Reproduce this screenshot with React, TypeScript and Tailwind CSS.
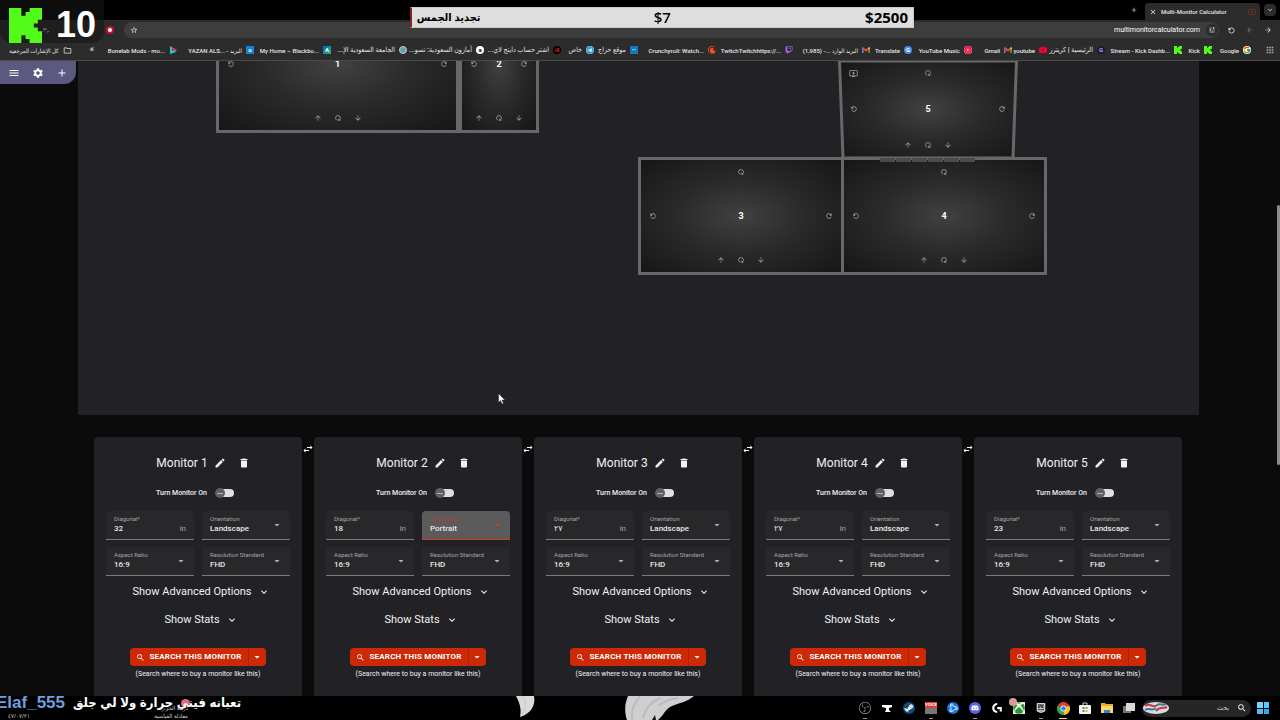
import clsx from 'clsx';
import React, { FunctionComponent } from 'react';
import { FaDiscord, FaSteamSymbol, FaXbox } from 'react-icons/fa';
import { FcGoogle } from 'react-icons/fc';
import {
  MdAdd, MdApps, MdArrowBack, MdArrowDownward, MdArrowDropDown, MdArrowForward, MdArrowUpward,
  MdClose, MdDelete, MdEdit, MdExpandMore, MdMenu, MdOutlineAddToQueue, MdOutlineFolder,
  MdPlaylistPlay, MdRefresh, MdSearch, MdSettings, MdStarOutline, MdSwapHoriz, MdTune,
} from 'react-icons/md';
import {
  SiBattledotnet, SiCrunchyroll, SiEpicgames, SiLogitechg, SiObsstudio, SiTelegram,
  SiTwitch, SiYoutube, SiYoutubemusic,
} from 'react-icons/si';

interface Bookmark {
  title: string
  width: string
  icon: React.ReactNode
  rtl?: boolean
}

interface Monitor {
  id: number
  diagonal: string
  orientation: string
  active?: boolean
}

interface ScreenProps {
  label: number
  className: string
  tilted?: boolean
}

interface SelectFieldProps {
  id: string
  label: string
  value: string
  options: string[]
  active?: boolean
}

const KickLogo: FunctionComponent<{ className: string }> = ({ className }) => (
  <svg className={className} fill="#53fc18" preserveAspectRatio="none" viewBox="1.333 0 21.334 24">
    <path d="M1.333 0h8v5.333H12V2.667h2.667V0h8v8H20v2.667h-2.667v2.666H20V16h2.667v8h-8v-2.667H12v-2.666H9.333V24h-8Z" />
  </svg>
);

const GmailLogo: FunctionComponent = () => (
  <svg className="h-2 w-2" viewBox="0 0 24 24">
    <path d="M0 5v16h5V9l7 6Z" fill="#4285f4" />
    <path d="M24 5v16h-5V9l-7 6Z" fill="#34a853" />
    <path d="M0 4h4l8 6 8-6h4v4l-12 9L0 8Z" fill="#ea4335" />
    <path d="M19 5l5-1v4l-5 4Z" fill="#fbbc04" />
  </svg>
);

const Badge: FunctionComponent<{ className: string; children?: React.ReactNode }> = ({
  className, children,
}) => (
  <span className={clsx('flex h-2 w-2 items-center justify-center text-[6px] font-bold leading-none', className)}>
    {children}
  </span>
);

const bookmarks: Bookmark[] = [
  {
    title: 'Bonelab Mods - mo...',
    width: 'w-[77px]',
    icon: (
      <svg className="h-2 w-2" viewBox="0 0 8 8">
        <path d="M1 0 8 4 6 6 3 3Z" fill="#e5384f" />
        <path d="M1 0v8l6-2-2-2-2 1V2Z" fill="#25c7c9" />
      </svg>
    ),
  },
  { title: 'YAZAN ALS... - البريد', width: 'w-[77px]', icon: <Badge className="bg-[#1683d8] text-white">o</Badge> },
  { title: 'My Home – Blackbo...', width: 'w-[77px]', icon: <Badge className="bg-gradient-to-br from-[#1266c4] to-[#35b558] text-white">A</Badge> },
  {
    title: 'الجامعة السعودية الإ...', width: 'w-[76px]', rtl: true, icon: <Badge className="rounded-full border border-[#b7d3dc] bg-[#6b9aa8]" />,
  },
  {
    title: 'أمازون السعودية: تسو...', width: 'w-[77px]', rtl: true, icon: <Badge className="rounded-sm bg-white text-black">a</Badge>,
  },
  {
    title: 'اشتر حساب دايتج لاي...', width: 'w-[77px]', rtl: true, icon: <Badge className="rounded-full bg-black text-[#e0202c]">ıll</Badge>,
  },
  {
    title: 'خاص', width: 'w-[33px]', rtl: true, icon: <SiTelegram className="h-2 w-2 rounded-full bg-white text-[#2aa1da]" />,
  },
  {
    title: 'موقع حراج', width: 'w-[44px]', rtl: true, icon: <Badge className="bg-[#1478b8] text-[#9fd4f5]">••</Badge>,
  },
  { title: 'Crunchyroll: Watch...', width: 'w-[78px]', icon: <SiCrunchyroll className="h-2 w-2 text-[#f4511e]" /> },
  { title: 'TwitchTwitchhttps://...', width: 'w-[77px]', icon: <SiTwitch className="h-2 w-2 text-[#a56bff]" /> },
  { title: '(1,985) -... البريد الوارد', width: 'w-[77px]', icon: <GmailLogo /> },
  { title: 'Translate', width: 'w-[42px]', icon: <Badge className="rounded-sm bg-[#4a8af4] text-white">G</Badge> },
  { title: 'YouTube Music', width: 'w-[60px]', icon: <SiYoutubemusic className="h-2 w-2 rounded-full bg-white text-[#ff0033]" /> },
  { title: 'Gmail', width: 'w-[40px]', icon: <GmailLogo /> },
  { title: 'youtube', width: 'w-[35px]', icon: <SiYoutube className="h-2 w-2 text-[#ff0033]" /> },
  {
    title: 'الرئيسية | كريترز', width: 'w-[58px]', rtl: true, icon: <Badge className="rounded-sm bg-[#1f1838] text-[#b6a5f5]">G</Badge>,
  },
  { title: 'Stream - Kick Dashb...', width: 'w-[77px]', icon: <KickLogo className="h-2 w-2" /> },
  { title: 'Kick', width: 'w-[30px]', icon: <KickLogo className="h-2 w-2" /> },
  { title: 'Google', width: 'w-[39px]', icon: <FcGoogle className="h-2 w-2 rounded-full bg-white" /> },
];

const monitors: Monitor[] = [
  { id: 1, diagonal: '32', orientation: 'Landscape' },
  {
    id: 2, diagonal: '18', orientation: 'Portrait', active: true,
  },
  { id: 3, diagonal: '٢٧', orientation: 'Landscape' },
  { id: 4, diagonal: '٢٧', orientation: 'Landscape' },
  { id: 5, diagonal: '23', orientation: 'Landscape' },
];

const BrowserBar: FunctionComponent = () => (
  <header className="shrink-0 bg-[#2c2c2c] font-[Roboto,'DejaVu_Sans_Condensed','DejaVu_Sans',sans-serif] text-[#e6e6e6]">
    <div className="flex h-5 items-end justify-end bg-black">
      <button aria-label="New tab" className="mr-px flex h-5 w-5 items-center justify-center" type="button">
        <MdAdd className="h-2 w-2" />
      </button>
      <div className="flex h-[17px] w-[115px] items-center gap-1 rounded-t bg-[#2c2c2c] px-1">
        <button aria-label="Close tab" type="button"><MdClose className="h-2 w-2" /></button>
        <span className="flex-1 whitespace-nowrap text-[6px] font-medium">Multi-Monitor Calculator</span>
        <MdOutlineAddToQueue className="h-2 w-2 text-[#7d2a22]" />
      </div>
      <button aria-label="Search tabs" className="mx-1 mb-1 flex h-3 w-3 items-center justify-center rounded bg-[#2c2c2c]" type="button">
        <MdExpandMore className="h-2 w-2" />
      </button>
    </div>
    <div className="flex h-5 items-center">
      <div className="flex w-[124px] items-center justify-end gap-4 pr-[10px]">
        <MdPlaylistPlay className="h-2 w-2" />
        <span className="w-6" />
        <span className="flex h-2 w-2 items-center justify-center rounded-full bg-[#c4102c]">
          <span className="h-1 w-1 rounded-full bg-white" />
        </span>
      </div>
      <div className="flex h-4 flex-1 items-center rounded-full bg-[#3d3d3d] pl-1 pr-px">
        <MdStarOutline className="ml-[2px] h-2 w-2" />
        <input
          aria-label="Address"
          className="mx-[6px] min-w-0 flex-1 bg-transparent text-right text-[7px] text-white outline-none"
          defaultValue="multimonitorcalculator.com"
          type="text"
        />
        <span className="flex h-3 w-3 items-center justify-center rounded-full bg-[#2c2c2c]"><MdTune className="h-2 w-2" /></span>
      </div>
      <div className="flex w-[61px] items-center justify-between px-2">
        <button aria-label="Reload" type="button"><MdRefresh className="h-[9px] w-[9px] -scale-x-100" /></button>
        <button aria-label="Back" className="text-[#777]" type="button"><MdArrowBack className="h-2 w-2" /></button>
        <button aria-label="Forward" type="button"><MdArrowForward className="h-2 w-2" /></button>
      </div>
    </div>
    <nav className="flex h-[21px] items-center justify-end border-b border-[#4a4a4a] text-[6px] font-medium">
      <div className="flex w-[100px] items-center justify-end gap-1 whitespace-nowrap pr-[6px]">
        <span dir="rtl">كل الإشارات المرجعية</span>
        <MdOutlineFolder className="mr-[14px] h-[9px] w-[9px] shrink-0" />
        <span className="text-[9px]">«</span>
      </div>
      {bookmarks.map((item) => (
        <a
          key={item.title}
          className={clsx('flex shrink-0 items-center justify-end gap-1 whitespace-nowrap', item.width, item.rtl && 'text-[7px]')}
          href="#bookmark"
        >
          <span dir={item.rtl ? 'rtl' : 'ltr'}>{item.title}</span>
          <span className="shrink-0">{item.icon}</span>
        </a>
      ))}
      <MdApps className="ml-[14px] mr-[5px] h-[10px] w-[10px] shrink-0 text-[#aaa]" />
    </nav>
  </header>
);

const RotateButton: FunctionComponent<{ label: string; flip?: boolean; className?: string }> = ({
  label, flip, className,
}) => (
  <button aria-label={label} className={className} type="button">
    <MdRefresh className={clsx('h-2 w-2', flip && '-scale-x-100')} />
  </button>
);

const Screen: FunctionComponent<ScreenProps> = ({ label, className, tilted }) => (
  <div
    className={clsx(
      'absolute flex flex-col items-center justify-between px-2 text-[#a3a3a3]',
      !tilted && 'border-[3px] border-[#686868] bg-[radial-gradient(ellipse_at_center,#414141_0%,#2a2a2a_45%,#161616_100%)] py-2',
      tilted && 'pb-[10px] pt-2',
      className,
    )}
  >
    {tilted && (
      <svg className="absolute inset-0 h-full w-full" preserveAspectRatio="none" viewBox="0 0 180 98">
        <defs>
          <radialGradient id="glow" r="0.7">
            <stop offset="0" stopColor="#414141" />
            <stop offset="0.45" stopColor="#2a2a2a" />
            <stop offset="1" stopColor="#161616" />
          </radialGradient>
        </defs>
        <path d="M1.5 0h177L175 97H5Z" fill="url(#glow)" stroke="#686868" strokeWidth="3" />
      </svg>
    )}
    {tilted && (
      <button aria-label="Stack monitor" className="absolute left-[11px] top-2" type="button">
        <MdOutlineAddToQueue className="h-[9px] w-[9px]" />
      </button>
    )}
    <RotateButton className="relative rotate-90" label="Tilt back" />
    <div className={clsx('relative flex w-full items-center justify-between', tilted && 'px-1')}>
      <RotateButton flip label="Turn left" />
      <span className="text-[9px] font-bold leading-3 text-white">{label}</span>
      <RotateButton label="Turn right" />
    </div>
    <div className="relative flex gap-3">
      <button aria-label="Move up" type="button"><MdArrowUpward className="h-2 w-2" /></button>
      <RotateButton className="rotate-90" label="Tilt forward" />
      <button aria-label="Move down" type="button"><MdArrowDownward className="h-2 w-2" /></button>
    </div>
  </div>
);

const fieldClass = 'flex h-[29px] min-w-0 items-center rounded-t-sm border-b px-2';

const SelectField: FunctionComponent<SelectFieldProps> = ({
  id, label, value, options, active,
}) => (
  <div className={clsx(fieldClass, active ? 'border-[#d9391b] bg-[#5b5b5b]' : 'border-[#7c7c7e] bg-[#28282b]')}>
    <div className="flex min-w-0 flex-1 flex-col">
      <label className={clsx('whitespace-nowrap text-[6px] leading-2', active ? 'text-[#b9422c]' : 'text-[#a5a5a7]')} htmlFor={id}>{label}</label>
      <select className="w-full appearance-none bg-transparent text-[8px] font-medium leading-3 text-[#e8e8e8] outline-none" defaultValue={value} id={id}>
        {options.map((option) => <option key={option}>{option}</option>)}
      </select>
    </div>
    <MdArrowDropDown className={clsx('-mr-px h-3 w-3 shrink-0', active ? 'text-[#d9391b]' : 'text-[#b0b0b0]')} />
  </div>
);

const MonitorCard: FunctionComponent<{ monitor: Monitor; last: boolean }> = ({ monitor, last }) => (
  <section className="relative flex min-w-0 flex-col items-center rounded-t bg-[#222226] px-3 pt-3 pb-8 text-[#f0f0f0]">
    {!last && (
      <button aria-label="Swap monitors" className="absolute -right-3 top-[6px] text-white" type="button">
        <MdSwapHoriz className="h-3 w-3" />
      </button>
    )}
    <div className="flex h-7 items-center pl-4">
      <h2 className="text-[12px]">{`Monitor ${monitor.id}`}</h2>
      <button aria-label="Rename" className="flex h-6 w-6 items-center justify-center" type="button"><MdEdit className="h-3 w-3" /></button>
      <button aria-label="Delete" className="flex h-6 w-6 items-center justify-center" type="button"><MdDelete className="h-3 w-3" /></button>
    </div>
    <label className="mt-[10px] flex h-3 items-center gap-2 pr-[6px] text-[7px] font-medium" htmlFor={`power-${monitor.id}`}>
      Turn Monitor On
      <span className="relative flex h-[10px] w-[19px] items-center">
        <input className="peer absolute inset-0 m-0 opacity-0" id={`power-${monitor.id}`} role="switch" type="checkbox" />
        <span className="ml-1 h-2 w-[15px] rounded-full bg-[#dedede]" />
        <span className="pointer-events-none absolute left-0 flex h-[10px] w-[10px] items-center justify-center rounded-full bg-[#606060] peer-checked:left-[9px]">
          <span className="h-px w-[6px] bg-[#b5b5b5]" />
        </span>
      </span>
    </label>
    <div className="mt-3 grid w-full grid-cols-2 gap-x-2 gap-y-[7px]">
      <div className={clsx(fieldClass, 'border-[#7c7c7e] bg-[#28282b]')}>
        <div className="flex min-w-0 flex-1 flex-col">
          <label className="text-[6px] leading-2 text-[#a5a5a7]" htmlFor={`diagonal-${monitor.id}`}>Diagonal*</label>
          <input
            className="h-3 w-full bg-transparent text-[8px] font-medium leading-3 text-[#e8e8e8] outline-none"
            defaultValue={monitor.diagonal}
            id={`diagonal-${monitor.id}`}
            type="text"
          />
        </div>
        <span className="pt-2 text-[8px] text-[#a5a5a7]">in</span>
      </div>
      <SelectField
        active={monitor.active}
        id={`orientation-${monitor.id}`}
        label="Orientation"
        options={['Landscape', 'Portrait']}
        value={monitor.orientation}
      />
      <SelectField id={`ratio-${monitor.id}`} label="Aspect Ratio" options={['16:9', '21:9']} value="16:9" />
      <SelectField id={`resolution-${monitor.id}`} label="Resolution Standard" options={['FHD', 'QHD', 'UHD']} value="FHD" />
    </div>
    <button className="mt-2 flex h-4 items-center gap-[6px] pl-[6px] text-[11px]" type="button">
      Show Advanced Options
      <MdExpandMore className="h-3 w-3" />
    </button>
    <button className="mt-3 flex h-4 items-center gap-[6px] pl-[6px] text-[11px]" type="button">
      Show Stats
      <MdExpandMore className="h-3 w-3" />
    </button>
    <div className="mt-5 flex h-[18px] rounded-sm bg-[#cd2906] text-white">
      <button className="flex items-center gap-1 whitespace-nowrap px-[6px] text-[8px] font-bold tracking-wide" type="button">
        <MdSearch className="h-[9px] w-[9px]" />
        SEARCH THIS MONITOR
      </button>
      <button aria-label="More stores" className="flex w-[18px] items-center justify-center border-l border-[#a82408]" type="button">
        <MdArrowDropDown className="h-3 w-3" />
      </button>
    </div>
    <p className="mt-1 whitespace-nowrap text-[7px] leading-2">(Search where to buy a monitor like this)</p>
  </section>
);

const ChromeLogo: FunctionComponent = () => (
  <svg className="h-[13px] w-[13px]" viewBox="0 0 24 24">
    <path d="M12 12 1.6 6A12 12 0 0 1 22.4 6Z" fill="#e33b2e" />
    <path d="M12 12 1.6 6A12 12 0 0 0 12 24Z" fill="#30a852" />
    <path d="M12 12V24A12 12 0 0 0 22.4 6Z" fill="#fbc116" />
    <circle cx="12" cy="12" fill="#fff" r="5.5" />
    <circle cx="12" cy="12" fill="#3f7ee8" r="4.3" />
  </svg>
);

const taskbarApps = [
  { name: 'OBS Studio', icon: <SiObsstudio className="h-3 w-3 text-[#b9b9b9]" />, running: true },
  {
    name: 'Anvil',
    icon: (
      <svg className="h-3 w-3" fill="#fff" viewBox="0 0 12 12">
        <path d="M1 3h10v2L8 6v2l2 2H4l1-2V6L1 5Z" />
      </svg>
    ),
  },
  { name: 'Steam', icon: <FaSteamSymbol className="h-3 w-3 rounded-full bg-[#114d7c] p-px text-white" /> },
  {
    name: 'Voicemeeter',
    icon: (
      <span className="flex h-3 w-3 flex-col bg-[#777] text-center text-[4px] font-bold leading-[6px] text-white">
        <span className="bg-[#df3b3b]">VOICE</span>
      </span>
    ),
    running: true,
  },
  { name: 'Battle.net', icon: <SiBattledotnet className="h-3 w-3 rounded-full bg-[#1273d8] p-px text-[#d5edff]" /> },
  { name: 'Discord', icon: <FaDiscord className="h-3 w-3 rounded-full bg-[#5b62e8] p-[2px] text-white" />, running: true },
  { name: 'Logitech G Hub', icon: <SiLogitechg className="h-[10px] w-[10px] text-white" /> },
  {
    name: 'Xbox',
    icon: (
      <span className="relative">
        <FaXbox className="h-3 w-3 bg-[#f0f0f0] text-[#279a2b]" />
        <span className="absolute -left-1 -top-1 h-2 w-2 rounded-full bg-[#d59a9a]" />
      </span>
    ),
  },
  { name: 'Epic Games', icon: <SiEpicgames className="h-[10px] w-[10px] text-[#d5d5d5]" />, running: true },
  { name: 'Chrome', icon: <ChromeLogo />, running: true },
  {
    name: 'Microsoft Store',
    icon: (
      <svg className="h-3 w-3" viewBox="0 0 12 12">
        <path d="M4 3V1h4v2" fill="none" stroke="#b9d9ed" />
        <rect fill="#f4f4f4" height="9" rx="1" width="12" y="3" />
        <path d="M3.500 5h2v2h-2Z" fill="#e8512b" />
        <path d="M6.500 5h2v2h-2Z" fill="#74b733" />
        <path d="M3.500 8h2v2h-2Z" fill="#2196e8" />
        <path d="M6.500 8h2v2h-2Z" fill="#f5b91d" />
      </svg>
    ),
  },
  {
    name: 'File Explorer',
    icon: (
      <svg className="h-3 w-3" viewBox="0 0 12 12">
        <path d="M0 1h4l1 1h7v9H0Z" fill="#e9ad30" />
        <path d="M0 4h12v7H0Z" fill="#fbd669" />
        <path d="M3 8h6v3H3Z" fill="#2f86ce" />
      </svg>
    ),
  },
  {
    name: 'Task View',
    icon: (
      <svg className="h-3 w-3" viewBox="0 0 12 12">
        <path d="M0 4h8v7H0Z" fill="#777" />
        <path d="M3 1h9v8H3Z" fill="#d9d9d9" />
      </svg>
    ),
  },
];

const Taskbar: FunctionComponent = () => (
  <footer className="relative flex h-6 shrink-0 items-center justify-end bg-black font-['Open_Sans','DejaVu_Sans_Condensed','DejaVu_Sans',sans-serif]">
    <div className="absolute left-2 top-2 flex w-[180px] items-end justify-between text-[6px] leading-2 text-[#cfcfcf]">
      <span className="pt-2">٤٧/٠٧/٢١</span>
      <span dir="rtl">
        درجة الحرارة
        <br />
        معادلة القياسية
      </span>
    </div>
    <span className="absolute left-[181px] top-[3px] h-[9px] w-[9px] rounded-full bg-[#e06a88]" />
    <svg className="absolute left-[516px] top-0 h-6 w-[178px]" viewBox="0 0 178 24">
      <path d="M0 0h18c2 10-4 18-14 21C6 12 3 6 0 0Z" fill="#dadada" />
      <path d="M7 0c3 6 3 11-1 18" fill="none" stroke="#c8c8c8" />
      <path d="M112 0h66c-7 6-15 7-22 10-7 3-8 9-14 14h-31c-3-9-2-17 1-24Z" fill="#cfcfcf" />
      <path d="M124 0c-6 7-9 14-8 24M144 2c-9 4-15 11-17 20M162 2c-9 1-15 4-20 8" fill="none" stroke="#bcbcbc" strokeWidth="2" />
      <path d="m136 24 3-5 1 5Z" fill="#111" />
    </svg>
    {taskbarApps.map((app) => (
      <button
        key={app.name}
        aria-label={app.name}
        className="relative flex h-6 w-[22px] items-center justify-center"
        type="button"
      >
        {app.icon}
        {app.running && (
          <span className={clsx('absolute bottom-px h-px', app.name === 'Chrome' ? 'w-2 bg-[#f0d1a5]' : 'w-1 bg-[#999]')} />
        )}
      </button>
    ))}
    <label className="ml-[2px] flex h-[17px] w-[109px] items-center gap-1 rounded-full bg-[#262626] pr-1" htmlFor="task-search">
      <svg className="h-3 w-7 shrink-0" viewBox="0 0 28 12">
        <ellipse cx="14" cy="6" fill="#d8dce0" rx="13" ry="6" />
        <path d="M3 4c5-4 8 3 12-1M14 9c4-5 7-2 11-4" fill="none" stroke="#c33b45" strokeWidth="2" />
        <path d="M3 8c5-3 7 2 11-2M15 3c4-2 6 1 9-1" fill="none" stroke="#367c9c" strokeWidth="2" />
      </svg>
      <input
        className="min-w-0 flex-1 bg-transparent pr-1 text-[7px] text-[#cfcfcf] outline-none placeholder:text-[#cfcfcf]"
        dir="rtl"
        id="task-search"
        placeholder="بحث"
        type="text"
      />
      <MdSearch className="h-[10px] w-[10px] shrink-0 text-white" />
    </label>
    <button aria-label="Start" className="ml-[6px] mr-[11px] grid h-3 w-3 grid-cols-2 gap-px" type="button">
      <span className="h-full bg-[#72d4fa]" />
      <span className="h-full bg-[#5ac8f7]" />
      <span className="h-full bg-[#49bdf4]" />
      <span className="h-full bg-[#2eaaf0]" />
    </button>
  </footer>
);

const App: FunctionComponent = () => (
  <div className="relative flex h-screen flex-col overflow-hidden bg-[#0b0b0b] font-[Roboto,'DejaVu_Sans',sans-serif]">
    <BrowserBar />
    <main className="relative min-h-0 flex-1 overflow-hidden">
      <nav className="absolute left-0 top-0 z-10 flex h-[23px] w-[76px] items-center justify-around rounded-br-xl bg-[#5c5980] px-[2px] text-white">
        <button aria-label="Menu" type="button"><MdMenu className="h-3 w-3" /></button>
        <button aria-label="Settings" type="button"><MdSettings className="h-3 w-3" /></button>
        <button aria-label="Add monitor" type="button"><MdAdd className="h-3 w-3" /></button>
      </nav>
      <div className="relative ml-[78px] mr-[81px] h-[354px] overflow-hidden bg-[#222226]">
        <Screen className="left-[138px] top-[-66px] h-[138px] w-[243px]" label={1} />
        <Screen className="left-[381px] top-[-66px] h-[138px] w-[80px]" label={2} />
        <Screen tilted className="left-[760px] top-0 h-[98px] w-[180px]" label={5} />
        <Screen className="left-[560px] top-[96px] h-[118px] w-[206px]" label={3} />
        <Screen className="left-[763px] top-[96px] h-[118px] w-[206px]" label={4} />
        <div className="absolute left-[802px] top-[97px] flex gap-px">
          {[0, 1, 2, 3, 4, 5].map((key) => <span key={key} className="h-1 w-[15px] bg-[#4b4b4b]" />)}
        </div>
      </div>
      <div className="ml-[94px] mr-[98px] mt-[22px] grid grid-cols-5 gap-3">
        {monitors.map((monitor, index) => (
          <MonitorCard key={monitor.id} last={index === monitors.length - 1} monitor={monitor} />
        ))}
      </div>
      <div className="absolute right-0 top-[144px] h-[260px] w-[3px] rounded-full bg-[#8b8b8b]" />
    </main>
    <Taskbar />

    {/* stream overlays */}
    <div className="absolute left-0 top-0 flex h-[43px] w-[104px] items-center gap-[14px] rounded-b-xl bg-[#161616]/60 pl-[9px] pt-[7px]">
      <KickLogo className="h-[35px] w-[33px]" />
      <span className="font-['Liberation_Sans',sans-serif] text-4xl font-bold leading-9 text-white">10</span>
    </div>
    <div className="absolute left-[32%] right-[366px] top-[7px] flex h-[21px] items-center justify-between border border-l-2 border-[#c9c9c9] border-l-[#8b2222] bg-[#dedede] px-[5px] font-['Noto_Sans','DejaVu_Sans_Condensed','DejaVu_Sans',sans-serif] text-black">
      <span className="w-16 whitespace-nowrap text-[11px] font-bold" dir="rtl">تجديد الجمس</span>
      <span className="text-[15px] font-medium">$7</span>
      <span className="w-16 text-right text-[15px] font-bold">$2500</span>
    </div>
    <div className="absolute -left-1 bottom-[5px] flex items-center gap-2 whitespace-nowrap font-['Liberation_Sans','DejaVu_Sans_Condensed','DejaVu_Sans',sans-serif] font-bold leading-6 [text-shadow:1px_1px_1px_#000]">
      <span className="text-[17px] text-[#6f9fdf]">Elaf_555</span>
      <span className="text-[13px] text-white" dir="rtl">تعبانه فيني حرارة ولا لي جلق</span>
    </div>
    <svg className="absolute left-[498px] top-[393px] h-3 w-2" viewBox="0 0 8 12">
      <path d="M.5.5v9l2-2 1.500 3.500 1.500-.7L4 7h3Z" fill="#fff" stroke="#222" strokeWidth="0.500" />
    </svg>
  </div>
);

export default App;
